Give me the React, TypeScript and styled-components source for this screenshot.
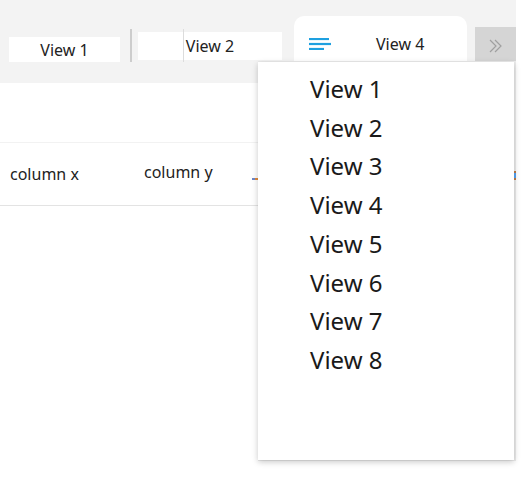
import React from "react";
import styled, { createGlobalStyle } from "styled-components";

const GlobalStyle = createGlobalStyle`
  html, body {
    margin: 0;
    padding: 0;
    background: #ffffff;
  }
  body {
    font-family: "Noto Sans", "Open Sans", sans-serif;
    color: #1f1f1f;
  }
`;

const Page = styled.div`
  position: relative;
  width: 528px;
  height: 484px;
  overflow: hidden;
`;

const Content = styled.div`
  width: 516px;
`;

const TabStrip = styled.div`
  display: flex;
  align-items: flex-start;
  height: 83px;
  padding-left: 9px;
  background: #f3f3f3;
  box-sizing: border-box;
`;

const Tab = styled.div<{ $top: number; $height: number; $width: number; $tick?: boolean }>`
  position: relative;
  display: flex;
  align-items: center;
  justify-content: center;
  width: ${(p) => p.$width}px;
  height: ${(p) => p.$height}px;
  margin-top: ${(p) => p.$top}px;
  background: #ffffff;
  font-size: 16px;
  color: #222;

  &::after {
    content: "";
    display: ${(p) => (p.$tick ? "block" : "none")};
    position: absolute;
    left: 45px;
    top: -3px;
    bottom: -2px;
    width: 1px;
    background: #dcdcdc;
  }
`;

const Separator = styled.div`
  width: 2px;
  height: 33px;
  margin: 29px 6px 0 10px;
  background: #cdcdcd;
`;

const ActiveTab = styled.div`
  display: flex;
  align-items: center;
  width: 173px;
  height: 67px;
  margin: 16px 0 0 12px;
  padding: 0 0 12px 15px;
  box-sizing: border-box;
  background: #ffffff;
  border-radius: 10px 10px 0 0;
  font-size: 16px;
  color: #222;
`;

const ActiveLabel = styled.span`
  margin-left: 45px;
`;

const MoreButton = styled.div`
  display: flex;
  align-items: center;
  justify-content: center;
  width: 41px;
  height: 56px;
  margin: 27px 0 0 8px;
  padding-bottom: 18px;
  box-sizing: border-box;
  background: #d5d5d5;
`;

const Spacer = styled.div`
  height: 59px;
`;

const HeaderRow = styled.div`
  display: flex;
  align-items: center;
  height: 64px;
  border-top: 1px solid #f2f2f2;
  border-bottom: 1px solid #e3e3e3;
  box-sizing: border-box;
  font-size: 16px;
  color: #222;
`;

const HeaderCell = styled.div<{ $width: number; $shift?: number }>`
  width: ${(p) => p.$width}px;
  padding-left: 10px;
  box-sizing: border-box;
  transform: translateY(${(p) => p.$shift ?? 0}px);
`;

const ResizeMark = styled.div`
  width: 6px;
  height: 2px;
  margin-top: 10px;
  background: linear-gradient(90deg, #6b87c9 0 50%, #e08a3c 50% 100%);
`;

const Menu = styled.div`
  position: absolute;
  left: 258px;
  top: 62px;
  width: 256px;
  height: 398px;
  padding: 8px 0 0 52px;
  box-sizing: border-box;
  background: #ffffff;
  box-shadow: 0 2px 6px rgba(0, 0, 0, 0.22), 1px 0 0 1px #ececec;
`;

const MenuItem = styled.div`
  font-size: 24px;
  line-height: 38.7px;
  color: #1a1a1a;
`;

const EdgeMark = styled.div`
  position: absolute;
  left: 514px;
  top: 171px;
  width: 2px;
  height: 9px;
  background: linear-gradient(180deg, #b0713f 0 25%, #4d96e0 25% 75%, #b0713f 75% 100%);
`;

const Hamburger = () => (
  <svg width="22" height="12" viewBox="0 0 22 12">
    <g stroke="#1ea0e0" strokeWidth="2.2">
      <line x1="0" y1="1" x2="20" y2="1" />
      <line x1="0" y1="6" x2="22" y2="6" />
      <line x1="0" y1="11" x2="15" y2="11" />
    </g>
  </svg>
);

const DoubleChevron = () => (
  <svg width="14" height="14" viewBox="0 0 14 14">
    <g fill="none" stroke="#a0a0a0" strokeWidth="1.2">
      <polyline points="1,1 7,7 1,13" />
      <polyline points="6,1 12,7 6,13" />
    </g>
  </svg>
);

const views = ["View 1", "View 2", "View 3", "View 4", "View 5", "View 6", "View 7", "View 8"];

export default function App() {
  return (
    <Page>
      <GlobalStyle />
      <Content>
        <TabStrip>
          <Tab $top={37} $height={25} $width={111}>View 1</Tab>
          <Separator />
          <Tab $top={32} $height={28} $width={144} $tick>View 2</Tab>
          <ActiveTab>
            <Hamburger />
            <ActiveLabel>View 4</ActiveLabel>
          </ActiveTab>
          <MoreButton>
            <DoubleChevron />
          </MoreButton>
        </TabStrip>
        <Spacer />
        <HeaderRow>
          <HeaderCell $width={134}>column x</HeaderCell>
          <HeaderCell $width={118} $shift={-2}>column y</HeaderCell>
          <ResizeMark />
        </HeaderRow>
      </Content>
      <Menu>
        {views.map((v) => (
          <MenuItem key={v}>{v}</MenuItem>
        ))}
      </Menu>
      <EdgeMark />
    </Page>
  );
}
